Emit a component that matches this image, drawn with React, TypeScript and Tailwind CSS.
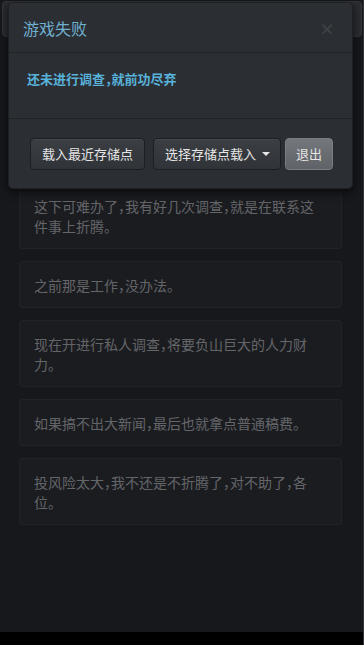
import React from 'react';

// 背景里的对话记录
const lines: string[] = [
  '这下可难办了，我有好几次调查，就是在联系这件事上折腾。',
  '之前那是工作，没办法。',
  '现在开进行私人调查，将要负山巨大的人力财力。',
  '如果搞不出大新闻，最后也就拿点普通稿费。',
  '投风险太大，我不还是不折腾了，对不助了，各位。',
];

function Card({ text }: { text: string }) {
  return (
    <div className="rounded-[3px] border border-[#222327] bg-[#1b1c20] pt-[13px] pb-[12px] pl-[14px] pr-[22px] text-[14px] leading-[20px] text-[#646569] [font-feature-settings:'halt']">
      {text}
    </div>
  );
}

function Button({ children, primary, className }: { children: React.ReactNode; primary?: boolean; className?: string }) {
  return (
    <button
      className={
        (primary
          ? 'flex h-[32px] items-center rounded-[4px] border border-[#7a7d82] bg-linear-to-b from-[#74777c] to-[#5f6267] px-[10px] text-[13px] text-[#e4e4e4]'
          : 'flex h-[32px] items-center rounded-[4px] border border-[#1c1e21] bg-linear-to-b from-[#3b3e43] to-[#303338] text-[13px] text-[#e6e6e6] shadow-[inset_0_1px_0_rgba(255,255,255,0.06)]') +
        ' ' +
        (className ?? '')
      }
    >
      {children}
    </button>
  );
}

export default function App() {
  return (
    <div className="relative flex h-[645px] w-[364px] flex-col overflow-hidden bg-[#17181c] font-['Noto_Sans_CJK_SC',sans-serif]">
      {/* 顶部导航栏（被弹窗盖住） */}
      <div className="absolute left-[2px] right-[2px] top-[1px] h-[36px] rounded-[4px] border border-[#33363a] bg-[#2a2d31]" />

      <div className="flex flex-1 flex-col gap-[12px] pl-[19px] pr-[22px] pt-[182px]">
        {lines.map((t, i) => (
          <Card key={i} text={t} />
        ))}
      </div>
      <div className="h-[13px] bg-black" />
      <div className="absolute right-0 top-0 h-full w-[1px] bg-[#34353a]" />

      {/* 游戏失败弹窗 */}
      <div className="absolute left-[8px] top-[2px] w-[345px] rounded-[5px] border border-[#1e2024] bg-[#2b2e33] shadow-[0_3px_10px_rgba(0,0,0,0.7)]">
        <div className="flex h-[50px] items-center justify-between border-b border-[#202226] pl-[14px] pr-[17px]">
          <span className="text-[16px] text-[#6fb0cf]">游戏失败</span>
          <span className="text-[16px] font-bold leading-none text-[#404348]">×</span>
        </div>
        <div className="border-b border-[#202226] pb-[29px] pl-[18px] pt-[16px] text-[13px] font-bold leading-[20px] text-[#58b2da] [font-feature-settings:'halt']">
          还未进行调查，就前功尽弃
        </div>
        <div className="flex justify-end gap-[4px] pb-[18px] pr-[19px] pt-[19px]">
          <div className="flex gap-[8px]">
            <Button className="px-[11px]">载入最近存储点</Button>
            <Button className="gap-[6px] pl-[11px] pr-[10px]">
              选择存储点载入
              <span className="h-0 w-0 border-x-[4px] border-t-[4px] border-x-transparent border-t-[#e6e6e6]" />
            </Button>
          </div>
          <Button primary>退出</Button>
        </div>
      </div>
    </div>
  );
}
